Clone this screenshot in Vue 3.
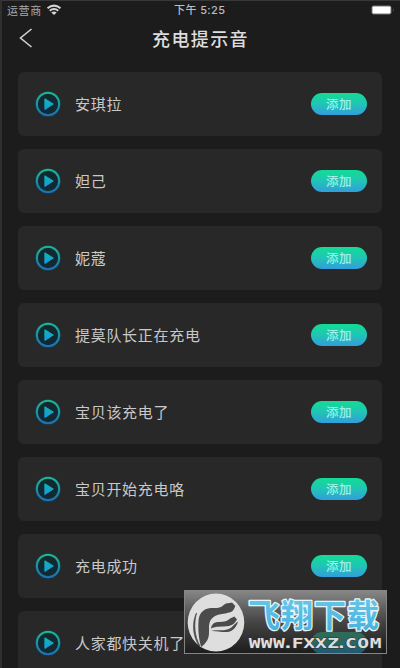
<script setup>
const sounds = ['安琪拉', '妲己', '妮蔻', '提莫队长正在充电', '宝贝该充电了', '宝贝开始充电咯', '充电成功', '人家都快关机了']
const lastIndex = sounds.length - 1
</script>

<template>
  <main class="screen">
    <div class="status">
      <span class="carrier">运营商</span>
      <svg class="wifi" viewBox="0 0 16 12" width="16" height="12">
        <path d="M1.5 4.3Q8-1 14.5 4.3" />
        <path d="M3.7 6.7Q8 3.2 12.3 6.7" />
        <path class="tip" d="M5.3 8.4Q8 6.4 10.7 8.4L8 11Z" />
      </svg>
      <span class="time">下午 5:25</span>
      <svg class="battery" viewBox="0 0 24 10" width="24" height="10">
        <rect x="0.5" y="0.5" width="20" height="9" rx="2.2" class="case" />
        <rect x="1.5" y="1.6" width="18" height="6.8" rx="1" class="charge" />
        <path d="M22 3.5Q23.5 5 22 6.5Z" class="case" />
      </svg>
    </div>
    <header class="nav">
      <svg class="back" viewBox="0 0 14 20" width="14" height="20"><path d="M12.5 1L1.5 10L12.5 19" /></svg>
      <h1>充电提示音</h1>
    </header>
    <ul class="list">
      <li v-for="(name, index) in sounds" :key="name" class="card">
        <svg class="play" viewBox="0 0 26 26" width="26" height="26">
          <defs>
            <linearGradient id="ring" x1="0" y1="0" x2="0" y2="1">
              <stop offset="0" stop-color="#20b690" />
              <stop offset="1" stop-color="#1e6fb5" />
            </linearGradient>
            <linearGradient id="arrow" x1="0" y1="0" x2="0" y2="1">
              <stop offset="0" stop-color="#12b3ae" />
              <stop offset="1" stop-color="#159be0" />
            </linearGradient>
          </defs>
          <circle cx="13" cy="13" r="11.2" fill="#112931" stroke="url(#ring)" stroke-width="2.1" />
          <path d="M9.9 7.8L18.3 13L9.9 18.5Z" fill="url(#arrow)" stroke="url(#arrow)" stroke-linejoin="round" />
        </svg>
        <span class="name">{{ name }}</span>
        <button class="add"><template v-if="index < lastIndex">添加</template></button>
      </li>
    </ul>
    <aside class="mark">
      <svg class="emblem" viewBox="0 0 58 59" width="58" height="59">
        <ellipse cx="29" cy="29.5" rx="28.3" ry="29" fill="#dedede" />
        <g fill="#4b4b4b">
          <path d="M14.3 54C11.5 46 11 36 11.5 28C12 20 16 16 23.7 15C30 15 34 15 37 11.7C40 9.5 43 10.5 45 9.5L48.3 13C46.5 17 46 19 42 19.5C37 21 32 21 28 23C23 26 22 30 22 35C22 42 23 47 14.3 54Z" />
          <path d="M9.5 20C6.5 32 7.5 43 13 53L11.5 52C5.5 42 5 29 9.5 20Z" stroke="#4b4b4b" stroke-width="0.7" />
          <path d="M23.8 35.5C25 31 27 29 32 29C37 29 41 28 43 25.5L47.5 23.5L50 26.5C48 30 46 32 42 33C35 34 29 33 23.8 35.5Z" />
          <path d="M24 38C30 36.5 35 38 40 36.5C45 35.5 47 31 51 28.5C50 33 46 39 40 39C34 39.5 29 37.5 24 38Z" />
        </g>
      </svg>
      <div class="brand">
        <svg class="brand-name" viewBox="0 0 136 40" width="136" height="40">
          <defs>
            <linearGradient id="sky" x1="0" y1="0" x2="0" y2="1">
              <stop offset="0" stop-color="#70cbea" />
              <stop offset="1" stop-color="#43afdd" />
            </linearGradient>
          </defs>
          <text x="-1" y="31.5" textLength="131" class="brand-text">飞翔下载</text>
        </svg>
        <svg class="site" viewBox="0 0 136 15" width="136" height="15">
          <text transform="scale(1.4 1)" x="-0.2 8.4 17.1 23.6 30.5 38.8 47.1 55.9 61.8 68.6 77.4 86.2" y="12" class="site-text">WWW.FXXZ.COM</text>
        </svg>
      </div>
    </aside>
  </main>
</template>

<style>
body { margin: 0; background: #1c1c1c; overflow: hidden; }
</style>

<style scoped>
* { box-sizing: border-box; }
.screen {
  position: relative;
  width: 400px;
  height: 668px;
  overflow: hidden;
  background: #1c1c1c;
  border-top: 1px solid #383838;
  border-left: 2px solid #303030;
  font-family: "Noto Sans CJK SC", sans-serif;
  color: #d0d0d0;
}
.status {
  display: grid;
  grid-template-columns: 39px 134px 1fr 28px;
  align-items: center;
  height: 17px;
  padding-left: 5px;
  font-size: 11px;
  line-height: 16px;
}
.status > * { grid-row: 1; }
.carrier { grid-column: 1; letter-spacing: 0.6px; color: #aaa; white-space: nowrap; }
.wifi { grid-column: 2; fill: none; stroke: #d4d4d4; stroke-width: 2; }
.wifi .tip { fill: #d4d4d4; stroke: none; }
.time { grid-column: 3; margin-left: -6px; font-family: Inter, "Noto Sans CJK SC", sans-serif; font-weight: 500; letter-spacing: 0.4px; color: #bdbdbd; }
.battery { grid-column: 4; margin-left: -1px; }
.case { fill: #747474; }
.charge { fill: #fff; }
.nav {
  display: flex;
  align-items: center;
  height: 40px;
  padding-left: 17px;
}
.back { fill: none; stroke: #d0d0d0; stroke-width: 1.6; }
h1 { margin: 0 0 0 119px; font-size: 18px; line-height: 28px; letter-spacing: 1.4px; font-weight: 500; color: #ddd; }
.list {
  display: flex;
  flex-direction: column;
  gap: 13px;
  margin: 14px 18px 0 16px;
  padding: 0;
  list-style: none;
}
.card {
  display: flex;
  flex: none;
  align-items: center;
  height: 64px;
  padding: 0 15px 0 17px;
  border-radius: 6px;
  background: #282828;
}
.play { flex: none; filter: drop-shadow(0 0 1px #074252); }
.name { margin-left: 14px; font-size: 15px; letter-spacing: 0.7px; line-height: 24px; color: #c9c9c9; white-space: nowrap; }
.add {
  width: 56px;
  height: 22px;
  margin-left: auto;
  padding: 0;
  border: 0;
  border-radius: 11px;
  background: linear-gradient(#12dc94, #20c5b5 50%, #329ddd);
  font: 500 12.5px/22px "Noto Sans CJK SC", sans-serif;
  letter-spacing: 0.6px;
  color: #9ff0e6;
}
.mark {
  position: absolute;
  left: 182px;
  top: 589px;
  display: flex;
  width: 203px;
  height: 64px;
  padding: 2px 0 0 2px;
  border: 1px solid #858585;
  background: linear-gradient(rgba(138, 138, 138, 0.96), rgba(75, 75, 75, 0.82) 50%, rgba(18, 18, 18, 0.5));
}
.emblem { flex: none; }
.brand { display: flex; flex-direction: column; margin-left: 4px; }
.brand-name { margin-top: 2px; overflow: visible; }
.brand-text {
  font: 700 32px "Noto Sans CJK SC", sans-serif;
  fill: url(#sky);
  stroke: #e5f5fa;
  stroke-width: 2.6px;
  stroke-linejoin: round;
  paint-order: stroke;
}
.site { margin-top: 1px; overflow: visible; }
.site-text { font: 700 14px "DejaVu Sans Mono", monospace; fill: #dedede; stroke: #333; stroke-width: 0.8px; paint-order: stroke; }
</style>
